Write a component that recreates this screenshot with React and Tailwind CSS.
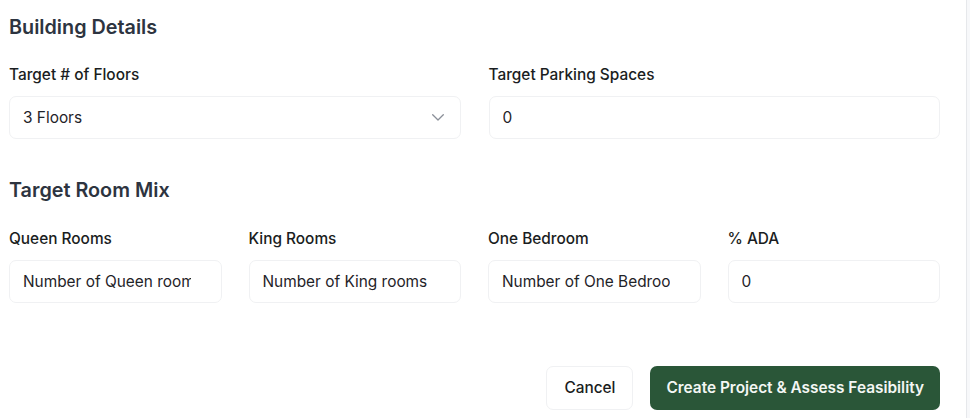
import React from "react";

function Field({ label, children }) {
  return (
    <div className="flex flex-col min-w-0">
      <label className="text-[15.4px] leading-[24px] font-medium text-[#1a1d21] mb-[9px]">{label}</label>
      {children}
    </div>
  );
}

function Input({ value, placeholder }) {
  return (
    <input
      readOnly
      value={value}
      placeholder={placeholder}
      className="h-[43px] w-full rounded-[7px] border border-[#f0f1f3] bg-white pl-[13px] pr-[30px] text-[15.4px] text-[#1f2328] placeholder:text-[#1f2328] outline-none"
    />
  );
}

export default function App() {
  return (
    <div className="flex w-[970px] h-[418px] bg-white overflow-hidden" style={{ fontFamily: "Inter, 'Noto Sans', sans-serif" }}>
      <div className="flex-1 pl-[9px] pr-[26px] pt-[13px]">
        <h2 className="text-[19.8px] leading-7 font-semibold text-[#2d3440] mb-[22px]">Building Details</h2>
        <div className="grid grid-cols-2 gap-x-[28px]">
          <Field label="Target # of Floors">
            <div className="h-[43px] w-full rounded-[7px] border border-[#f0f1f3] bg-white pl-[13px] pr-[16px] flex items-center justify-between text-[15.4px] text-[#1f2328]">
              <span>3 Floors</span>
              <svg width="12" height="7" viewBox="0 0 12 7" fill="none" stroke="#8a8f98" strokeWidth="1.3" strokeLinecap="round" strokeLinejoin="round"><path d="M0.7 0.7 L6 6 L11.3 0.7" /></svg>
            </div>
          </Field>
          <Field label="Target Parking Spaces">
            <Input value="0" />
          </Field>
        </div>
        <h2 className="text-[19.8px] leading-7 font-semibold text-[#2d3440] mt-[37px] mb-[23px]">Target Room Mix</h2>
        <div className="grid grid-cols-4 gap-x-[27px]">
          <Field label="Queen Rooms"><Input placeholder="Number of Queen rooms" /></Field>
          <Field label="King Rooms"><Input placeholder="Number of King rooms" /></Field>
          <Field label="One Bedroom"><Input placeholder="Number of One Bedroom" /></Field>
          <Field label="% ADA"><Input value="0" /></Field>
        </div>
        <div className="flex justify-end gap-[17px] mt-[63px]">
          <button className="h-[44px] px-[17px] rounded-[7px] border border-[#f0f1f3] bg-white text-[15.4px] font-medium text-[#1a1d21]">Cancel</button>
          <button className="h-[44px] px-[16px] rounded-[7px] bg-[#2a5638] text-[15.4px] font-semibold text-[#f4f7f4]">Create Project &amp; Assess Feasibility</button>
        </div>
      </div>
      <div className="w-[4px] h-full border-l border-[#e6e8eb] bg-[#f7f8fa]" />
    </div>
  );
}
